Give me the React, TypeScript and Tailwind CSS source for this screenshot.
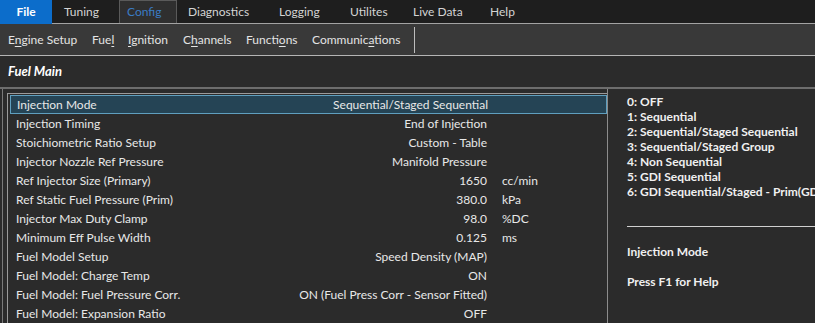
const menus = [
  { label: "Tuning", cls: "w-[67px] pl-[12px]" },
  { label: "Config", cls: "w-[58px] pl-[7px] mr-[11px]", active: true },
  { label: "Diagnostics", cls: "w-[91px]" },
  { label: "Logging", cls: "w-[71px]" },
  { label: "Utilites", cls: "w-[63px]" },
  { label: "Live Data", cls: "w-[77px]" },
  { label: "Help", cls: "w-[50px]" },
];

// [before, underlined, after, width up to next item]
const tools: [string, string, string, string][] = [
  ["E", "n", "gine Setup", "w-[84px]"],
  ["Fue", "l", "", "w-[36px]"],
  ["", "I", "gnition", "w-[55px]"],
  ["C", "h", "annels", "w-[63px]"],
  ["Functi", "o", "ns", "w-[66px]"],
  ["Communic", "a", "tions", "w-[102px]"],
];

const rows = [
  { name: "Injection Mode", value: "Sequential/Staged Sequential", unit: "" },
  { name: "Injection Timing", value: "End of Injection", unit: "" },
  { name: "Stoichiometric Ratio Setup", value: "Custom - Table", unit: "" },
  { name: "Injector Nozzle Ref Pressure", value: "Manifold Pressure", unit: "" },
  { name: "Ref Injector Size (Primary)", value: "1650", unit: "cc/min" },
  { name: "Ref Static Fuel Pressure (Prim)", value: "380.0", unit: "kPa" },
  { name: "Injector Max Duty Clamp", value: "98.0", unit: "%DC" },
  { name: "Minimum Eff Pulse Width", value: "0.125", unit: "ms" },
  { name: "Fuel Model Setup", value: "Speed Density (MAP)", unit: "" },
  { name: "Fuel Model: Charge Temp", value: "ON", unit: "" },
  { name: "Fuel Model: Fuel Pressure Corr.", value: "ON (Fuel Press Corr - Sensor Fitted)", unit: "" },
  { name: "Fuel Model: Expansion Ratio", value: "OFF", unit: "" },
];

const options = [
  "0: OFF",
  "1: Sequential",
  "2: Sequential/Staged Sequential",
  "3: Sequential/Staged Group",
  "4: Non Sequential",
  "5: GDI Sequential",
  "6: GDI Sequential/Staged - Prim(GDI)",
];

export default function App() {
  return (
    <div className="h-[323px] w-[815px] overflow-hidden bg-[#2b2b2b] text-[12px] text-[#e8e8e8] font-['Lato','Liberation_Sans',sans-serif]">
      {/* Menu bar */}
      <div className="flex h-[24px] items-end border-b border-[#a3a3a3] bg-[#1e1e1e]">
        <div className="flex h-[24px] w-[52px] shrink-0 items-center justify-center self-start bg-[#0c6dcb] font-bold text-white">File</div>
        {menus.map(m => (
          <div
            key={m.label}
            className={`flex h-[23px] shrink-0 ${m.cls} items-center ${m.active ? "border border-b-0 border-[#5a5a5a] bg-[#2f2f2f] text-[#3b7cc4]" : "text-[#d4d4d4]"}`}
          >
            {m.label}
          </div>
        ))}
      </div>

      {/* Toolbar */}
      <div className="flex h-[32px] items-center border-b border-[#b5b5b5] bg-[#393939] pl-[8px] text-[#e4e4e4]">
        {tools.map(([a, u, b, w]) => (
          <span key={a + u + b} className={`${w} shrink-0 whitespace-nowrap`}>
            {a}<span className="underline underline-offset-2">{u}</span>{b}
          </span>
        ))}
        <div className="h-[26px] w-px bg-[#bdbdbd]" />
      </div>

      {/* Title */}
      <div className="flex h-[33px] items-center border-b-2 border-[#6d6d6d] bg-[#2b2b2b] pl-[8px] text-[13px] font-bold italic text-white">
        Fuel Main
      </div>

      {/* Body */}
      <div className="flex h-[240px]">
        <div className="w-[607px] shrink-0 pl-[2px]">
          <div className="h-full border-l border-[#7a7a7a] pl-[4px] pt-[4px]">
            <div className="h-full border-l border-t border-[#9a9a9a] pl-[2px] pt-[1px]">
              {rows.map((r, i) => (
                <div
                  key={r.name}
                  className={`flex h-[19px] items-center pl-[6px] ${i === 0 ? "border border-[#5f9fbf] bg-[#254455] pl-[5px]" : ""}`}
                >
                  <span className="w-[250px] shrink-0 truncate">{r.name}</span>
                  <span className="w-[221px] shrink-0 text-right whitespace-nowrap">{r.value}</span>
                  <span className="pl-[15px]">{r.unit}</span>
                </div>
              ))}
            </div>
          </div>
        </div>

        <div className="min-w-0 flex-1 border-l border-[#8c8c8c] pl-[19px] pt-[5px] font-bold text-[#f0f0f0]">
          <div className="flex flex-col leading-[15px]">
            {options.map(o => (
              <span key={o} className="whitespace-nowrap">{o}</span>
            ))}
          </div>
          <div className="mt-[27px] h-px bg-[#d0d0d0]" />
          <div className="mt-[17px] leading-[15px]">Injection Mode</div>
          <div className="mt-[15px] leading-[15px]">Press F1 for Help</div>
        </div>
      </div>
    </div>
  );
}
